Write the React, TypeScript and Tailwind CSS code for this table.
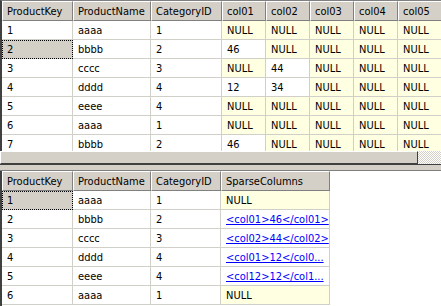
import React from "react";

type Col = { name: string; w: number };

const topCols: Col[] = [
  { name: "ProductKey", w: 71 },
  { name: "ProductName", w: 78 },
  { name: "CategoryID", w: 71 },
  { name: "col01", w: 44 },
  { name: "col02", w: 44 },
  { name: "col03", w: 44 },
  { name: "col04", w: 44 },
  { name: "col05", w: 44 },
];

const topRows: string[][] = [
  ["1", "aaaa", "1", "NULL", "NULL", "NULL", "NULL", "NULL"],
  ["2", "bbbb", "2", "46", "NULL", "NULL", "NULL", "NULL"],
  ["3", "cccc", "3", "NULL", "44", "NULL", "NULL", "NULL"],
  ["4", "dddd", "4", "12", "34", "NULL", "NULL", "NULL"],
  ["5", "eeee", "4", "NULL", "NULL", "NULL", "NULL", "NULL"],
  ["6", "aaaa", "1", "NULL", "NULL", "NULL", "NULL", "NULL"],
  ["7", "bbbb", "2", "46", "NULL", "NULL", "NULL", "NULL"],
];

const bottomCols: Col[] = [
  { name: "ProductKey", w: 71 },
  { name: "ProductName", w: 78 },
  { name: "CategoryID", w: 70 },
  { name: "SparseColumns", w: 109 },
];

const bottomRows: string[][] = [
  ["1", "aaaa", "1", "NULL"],
  ["2", "bbbb", "2", "<col01>46</col01>"],
  ["3", "cccc", "3", "<col02>44</col02>"],
  ["4", "dddd", "4", "<col01>12</col0..."],
  ["5", "eeee", "4", "<col12>12</col1..."],
  ["6", "aaaa", "1", "NULL"],
];

function HeaderRow({ cols }: { cols: Col[] }) {
  return (
    <div className="flex h-[20px] shrink-0">
      {cols.map((c) => (
        <div
          key={c.name}
          style={{ width: c.w }}
          className="shrink-0 h-full bg-[#d4d0c8] border-t border-l border-white border-r border-r-[#808080] border-b border-b-[#808080] pl-[4px] leading-[19px] whitespace-nowrap overflow-hidden"
        >
          {c.name}
        </div>
      ))}
    </div>
  );
}

function DataRows({
  cols,
  rows,
  selected,
  linkCol,
}: {
  cols: Col[];
  rows: string[][];
  selected: number;
  linkCol?: number;
}) {
  return (
    <>
      {rows.map((r, ri) => (
        <div key={ri} className="flex h-[19px] shrink-0">
          {r.map((v, ci) => {
            const isNull = v === "NULL";
            const isSel = ri === selected && ci === 0;
            const isLink = ci === linkCol && !isNull;
            return (
              <div
                key={ci}
                style={{ width: cols[ci].w }}
                className={
                  "shrink-0 h-full border-r border-b border-[#d0d0c8] pl-[5px] leading-[19px] whitespace-nowrap overflow-hidden " +
                  (isSel
                    ? "bg-[#d4d0c8] outline-1 outline-dotted outline-black -outline-offset-1"
                    : isNull
                    ? "bg-[#ffffe1]"
                    : "bg-white")
                }
              >
                {isLink ? (
                  <span className="text-[#0000ff] underline">{v}</span>
                ) : (
                  v
                )}
              </div>
            );
          })}
        </div>
      ))}
    </>
  );
}

export default function App() {
  return (
    <div className="w-[441px] h-[306px] overflow-hidden bg-white flex flex-col text-[11px] text-black font-['DejaVu_Sans_Condensed','Liberation_Sans',Arial,sans-serif]">
      <div className="h-[151px] shrink-0 overflow-hidden flex flex-col border-t border-t-[#808080] border-l-2 border-l-[#404040]">
        <HeaderRow cols={topCols} />
        <DataRows cols={topCols} rows={topRows} selected={1} />
      </div>

      <div className="h-[13px] shrink-0 flex">
        <div className="flex-1 bg-[#d4d0c8] border-t border-l border-white border-r border-r-[#404040] border-b border-b-[#404040]" />
        <div className="w-[23px] bg-[repeating-conic-gradient(#d4d0c8_0_25%,#ffffff_0_50%)] bg-[length:2px_2px]" />
      </div>

      <div className="h-[7px] shrink-0 bg-[#d4d0c8] border-t border-t-[#404040] border-b border-b-[#808080]" />

      <div className="flex-1 overflow-hidden flex flex-col border-l-2 border-l-[#404040]">
        <HeaderRow cols={bottomCols} />
        <DataRows cols={bottomCols} rows={bottomRows} selected={0} linkCol={3} />
      </div>
    </div>
  );
}
